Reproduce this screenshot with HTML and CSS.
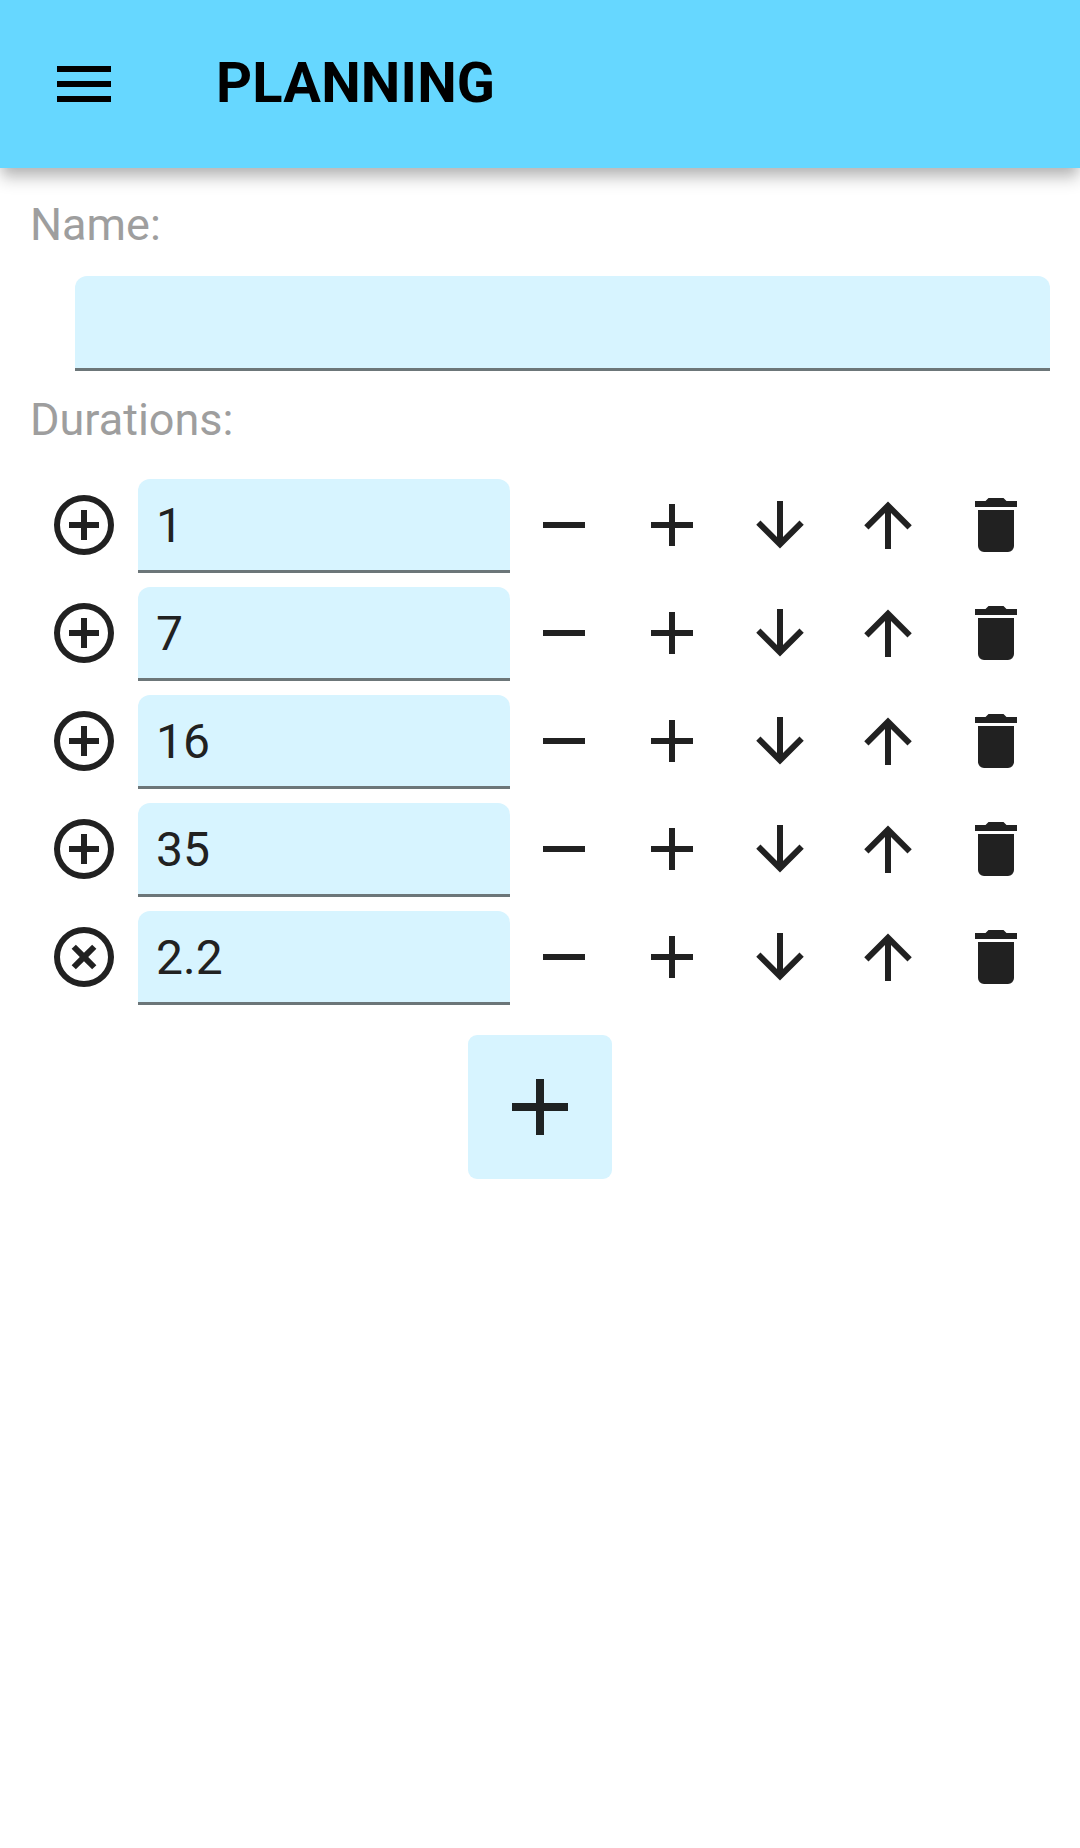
FILE: index.html
```html
<!DOCTYPE html>
<html lang="en">
<head>
<meta charset="utf-8">
<title>Planning</title>
<link rel="stylesheet" href="styles.css">
</head>
<body>
<svg class="sprite" aria-hidden="true">
  <symbol id="menu" viewBox="0 0 24 24"><path d="M3 6h18v2H3zM3 11h18v2H3zM3 16h18v2H3z"/></symbol>
  <symbol id="circle-plus" viewBox="0 0 24 24"><path d="M12 20a8 8 0 1 1 0-16 8 8 0 0 1 0 16m0-18a10 10 0 1 0 0 20 10 10 0 0 0 0-20m1 5h-2v4H7v2h4v4h2v-4h4v-2h-4z"/></symbol>
  <symbol id="circle-times" viewBox="0 0 24 24"><path d="M12 20a8 8 0 1 1 0-16 8 8 0 0 1 0 16m0-18a10 10 0 1 0 0 20 10 10 0 0 0 0-20m2.71 5.88L12 10.59 9.29 7.88 7.88 9.29 10.59 12l-2.71 2.71 1.41 1.41L12 13.41l2.71 2.71 1.41-1.41L13.41 12l2.71-2.71z"/></symbol>
  <symbol id="minus" viewBox="0 0 24 24"><path d="M19 13H5v-2h14z"/></symbol>
  <symbol id="plus" viewBox="0 0 24 24"><path d="M19 13h-6v6h-2v-6H5v-2h6V5h2v6h6z"/></symbol>
  <symbol id="down" viewBox="0 0 24 24"><path d="M11 4h2v12l5.5-5.5 1.42 1.42L12 19.84l-7.92-7.92L5.5 10.5 11 16z"/></symbol>
  <symbol id="up" viewBox="0 0 24 24"><path d="M13 20h-2V8l-5.500 5.500-1.420-1.420L12 4.160l7.920 7.920-1.420 1.420L13 8z"/></symbol>
  <symbol id="trash" viewBox="0 0 24 24"><path d="M19 4h-3.500l-1-1h-5l-1 1H5v2h14M6 19a2 2 0 0 0 2 2h8a2 2 0 0 0 2-2V7H6z"/></symbol>
</svg>
<header class="app-bar">
  <svg class="icon"><use href="#menu"/></svg>
  <h1 class="title">PLANNING</h1>
</header>
<main class="form">
  <div class="label">Name:</div>
  <div class="field name-field"></div>
  <div class="label durations-label">Durations:</div>
  <div class="durations">
    <div class="row">
      <svg class="icon"><use href="#circle-plus"/></svg><div class="field">1</div>
      <svg class="icon"><use href="#minus"/></svg><svg class="icon"><use href="#plus"/></svg><svg class="icon"><use href="#down"/></svg><svg class="icon"><use href="#up"/></svg><svg class="icon"><use href="#trash"/></svg>
    </div>
    <div class="row">
      <svg class="icon"><use href="#circle-plus"/></svg><div class="field">7</div>
      <svg class="icon"><use href="#minus"/></svg><svg class="icon"><use href="#plus"/></svg><svg class="icon"><use href="#down"/></svg><svg class="icon"><use href="#up"/></svg><svg class="icon"><use href="#trash"/></svg>
    </div>
    <div class="row">
      <svg class="icon"><use href="#circle-plus"/></svg><div class="field">16</div>
      <svg class="icon"><use href="#minus"/></svg><svg class="icon"><use href="#plus"/></svg><svg class="icon"><use href="#down"/></svg><svg class="icon"><use href="#up"/></svg><svg class="icon"><use href="#trash"/></svg>
    </div>
    <div class="row">
      <svg class="icon"><use href="#circle-plus"/></svg><div class="field">35</div>
      <svg class="icon"><use href="#minus"/></svg><svg class="icon"><use href="#plus"/></svg><svg class="icon"><use href="#down"/></svg><svg class="icon"><use href="#up"/></svg><svg class="icon"><use href="#trash"/></svg>
    </div>
    <div class="row">
      <svg class="icon"><use href="#circle-times"/></svg><div class="field">2.2</div>
      <svg class="icon"><use href="#minus"/></svg><svg class="icon"><use href="#plus"/></svg><svg class="icon"><use href="#down"/></svg><svg class="icon"><use href="#up"/></svg><svg class="icon"><use href="#trash"/></svg>
    </div>
  </div>
  <button class="add" type="button" aria-label="Add duration"><svg class="icon"><use href="#plus"/></svg></button>
</main>
</body>
</html>
```
FILE: styles.css
```css
* { box-sizing: border-box; }
body {
  margin: 0;
  min-height: 1848px;
  background: #fff;
  color: #212121;
  font-family: Roboto, sans-serif;
}
.sprite { display: none; }
.icon {
  display: block;
  width: 72px;
  height: 72px;
  fill: currentColor;
}
.app-bar {
  display: flex;
  align-items: center;
  gap: 96px;
  height: 168px;
  padding: 0 48px;
  background: #66d7ff;
  color: #000;
  box-shadow: 0 6px 12px -3px rgba(0, 0, 0, .14), 0 12px 15px -1px rgba(0, 0, 0, .2);
}
.title {
  margin: 0;
  padding-bottom: 3px;
  font-size: 56px;
  line-height: 66px;
  font-weight: 700;
  letter-spacing: .2px;
}
.form { padding: 30px 30px 0; }
.label {
  height: 54px;
  font-size: 45px;
  line-height: 54px;
  color: #9e9e9e;
}
.field {
  height: 94px;
  padding: 0 18px;
  border-radius: 12px 12px 0 0;
  background: #d7f4ff;
  box-shadow: inset 0 -3px #6c7679;
  font-size: 48px;
  line-height: 94px;
}
.name-field {
  height: 95px;
  margin: 24px 0 0 45px;
}
.durations-label { margin-top: 22px; }
.durations { margin-top: 24px; }
.row {
  display: grid;
  grid-template-columns: 108px 372px repeat(5, 108px);
  align-items: center;
  justify-items: center;
  height: 108px;
}
.row .field {
  justify-self: stretch;
  margin-top: 2px;
}
.add {
  display: flex;
  align-items: center;
  justify-content: center;
  width: 144px;
  height: 144px;
  margin: 24px auto 0;
  padding: 0;
  border: 0;
  border-radius: 9px;
  background: #d7f4ff;
  color: #1e2223;
}
.add .icon { width: 96px; height: 96px; }
```
